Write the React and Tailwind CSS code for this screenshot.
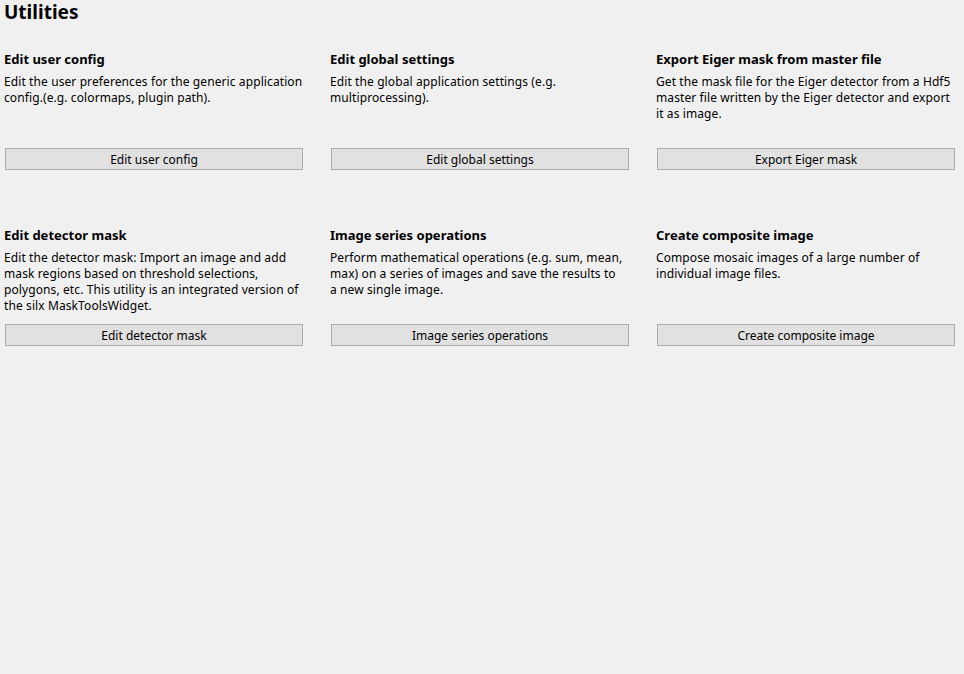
import React from 'react';

export default function App() {
    const utilities = [
        {
            title: 'Edit user config',
            text: 'Edit the user preferences for the generic application config.(e.g. colormaps, plugin path).',
            button: 'Edit user config'
        },
        {
            title: 'Edit global settings',
            text: 'Edit the global application settings (e.g. multiprocessing).',
            button: 'Edit global settings'
        },
        {
            title: 'Export Eiger mask from master file',
            text: 'Get the mask file for the Eiger detector from a Hdf5 master file written by the Eiger detector and export it as image.',
            button: 'Export Eiger mask'
        },
        {
            title: 'Edit detector mask',
            text: 'Edit the detector mask: Import an image and add mask regions based on threshold selections, polygons, etc. This utility is an integrated version of the silx MaskToolsWidget.',
            button: 'Edit detector mask'
        },
        {
            title: 'Image series operations',
            text: (
                <>
                    Perform mathematical operations (e.g. sum, mean, max) on a
                    series of images and save the results to
                    <br />a new single image.
                </>
            ),
            button: 'Image series operations'
        },
        {
            title: 'Create composite image',
            text: 'Compose mosaic images of a large number of individual image files.',
            button: 'Create composite image'
        }
    ];

    return (
        <div
            className="w-[964px] h-[674px] overflow-hidden bg-[#f0f0f0] text-black"
            style={{ fontFamily: '"Noto Sans", "Open Sans", sans-serif' }}
        >
            {/* Header */}
            <h1 className="pl-[4px] text-[19px] font-bold leading-[24px]">
                Utilities
            </h1>

            {/* Utility grid */}
            <div className="grid grid-cols-[300px_300px_300px] gap-x-[26px] gap-y-[57px] pl-[4px] mt-[27px]">
                {utilities.map((item, index) => (
                    <div key={index} className="flex flex-col h-[119px]">
                        <h2 className="text-[13px] font-bold leading-[16px]">
                            {item.title}
                        </h2>
                        <p className="mt-[7px] text-[12px] leading-[16px] tracking-[0.1px]">
                            {item.text}
                        </p>
                        <button className="mt-auto mx-[1px] h-[22px] pt-[1px] border border-[#adadad] bg-[#e1e1e1] text-[12px] leading-[19px]">
                            {item.button}
                        </button>
                    </div>
                ))}
            </div>
        </div>
    );
}
